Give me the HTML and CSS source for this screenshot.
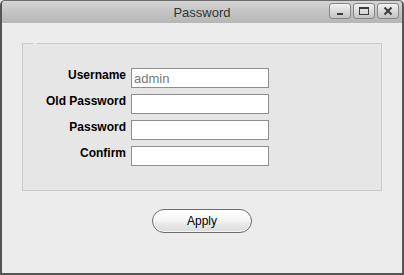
FILE: index.html
```html
<!DOCTYPE html>
<html>
<head>
<meta charset="utf-8">
<link rel="stylesheet" href="styles.css">
</head>
<body>
<div class="window">
  <div class="titlebar">
    <span class="title">Password</span>
    <div class="controls">
      <span class="ctl"><svg width="20" height="14" viewBox="0 0 20 14"><rect x="7" y="9" width="6" height="2" fill="#3c3c3c"/></svg></span>
      <span class="ctl"><svg width="20" height="14" viewBox="0 0 20 14"><rect x="5.5" y="3.5" width="9" height="7" fill="none" stroke="#3c3c3c" stroke-width="1"/><rect x="5" y="3" width="10" height="2" fill="#3c3c3c"/></svg></span>
      <span class="ctl"><svg width="20" height="14" viewBox="0 0 20 14"><path d="M6.5 3.5 L13.5 10.5 M13.5 3.5 L6.5 10.5" stroke="#3c3c3c" stroke-width="2"/></svg></span>
    </div>
  </div>
  <div class="content">
    <fieldset class="group">
      <legend class="legend"></legend>
      <div class="form">
        <label class="lbl">Username</label>
        <input class="field" type="text" value="admin">
        <label class="lbl">Old Password</label>
        <input class="field" type="password">
        <label class="lbl">Password</label>
        <input class="field" type="password">
        <label class="lbl">Confirm</label>
        <input class="field" type="password">
      </div>
    </fieldset>
    <div class="actions">
      <button class="apply">Apply</button>
    </div>
  </div>
</div>
</body>
</html>
```

FILE: styles.css
```css
html, body {
  margin: 0;
  padding: 0;
  background: #ececec;
}
.window {
  box-sizing: border-box;
  width: 404px;
  height: 275px;
  border: 2px solid #555;
  border-top: 1px solid #6a6a6a;
  border-radius: 5px 5px 0 0;
  background: #ececec;
  font-family: "Liberation Sans", Arial, sans-serif;
  display: flex;
  flex-direction: column;
  overflow: hidden;
}
.titlebar {
  height: 22px;
  flex: none;
  display: flex;
  align-items: center;
  justify-content: center;
  position: relative;
  background: linear-gradient(#d4d4d4, #c4c4c4 50%, #b6b6b6);
  border-radius: 4px 4px 0 0;
}
.title {
  font-size: 13px;
  color: #333;
}
.controls {
  position: absolute;
  right: 3px;
  top: 2px;
  display: flex;
  gap: 2px;
}
.ctl {
  box-sizing: border-box;
  width: 22px;
  height: 16px;
  border: 1px solid #858585;
  border-radius: 3px;
  background: linear-gradient(#f2f2f2, #d8d8d8 55%, #c2c2c2);
  display: flex;
  align-items: center;
  justify-content: center;
}
.ctl svg {
  display: block;
}
.content {
  padding: 20px 20px 0 20px;
  display: flex;
  flex-direction: column;
}
.group {
  margin: 0;
  border: 1px solid #cacaca;
  background: #e6e6e6;
  padding: 24px 0 24px 10px;
  min-width: 0;
}
.legend {
  padding: 0 2px;
  margin: 0;
  height: 0;
}
.form {
  display: grid;
  grid-template-columns: 93px 138px;
  column-gap: 5px;
  row-gap: 6px;
}
.lbl {
  font-weight: bold;
  font-size: 12px;
  line-height: 14px;
  color: #000;
  text-align: right;
  white-space: nowrap;
  align-self: start;
  padding-top: 0;
}
.field {
  box-sizing: border-box;
  width: 138px;
  height: 20px;
  margin: 0;
  border: 1px solid #8e8e8e;
  background: #fff;
  padding: 0 2px;
  font-family: "Liberation Sans", Arial, sans-serif;
  font-size: 13px;
  color: #777;
  outline: none;
}
.actions {
  display: flex;
  justify-content: center;
  margin-top: 18px;
}
.apply {
  box-sizing: border-box;
  width: 100px;
  height: 24px;
  border: 1px solid #6e6e6e;
  border-radius: 12px;
  background: linear-gradient(#ffffff, #f6f6f6 45%, #e6e6e6 70%, #dadada);
  box-shadow: inset 0 -1px 1px rgba(255,255,255,0.8);
  font-family: "Liberation Sans", Arial, sans-serif;
  font-size: 12px;
  color: #000;
  padding: 0;
}
```
